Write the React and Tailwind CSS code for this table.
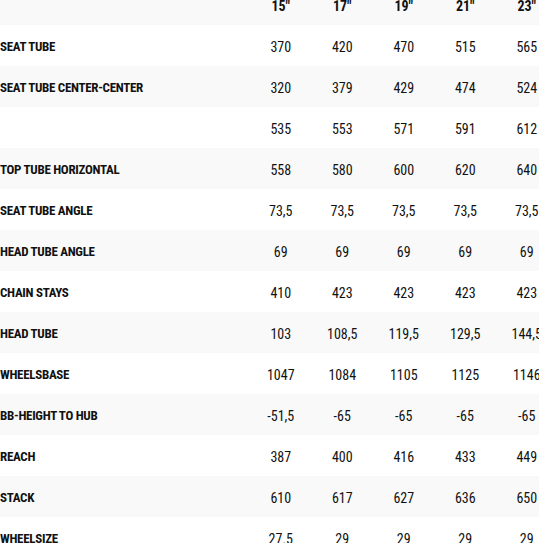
const sizes = ['15"', '17"', '19"', '21"', '23"'];

const rows = [
  ["SEAT TUBE", ["370", "420", "470", "515", "565"]],
  ["SEAT TUBE CENTER-CENTER", ["320", "379", "429", "474", "524"]],
  ["", ["535", "553", "571", "591", "612"]],
  ["TOP TUBE HORIZONTAL", ["558", "580", "600", "620", "640"]],
  ["SEAT TUBE ANGLE", ["73,5", "73,5", "73,5", "73,5", "73,5"]],
  ["HEAD TUBE ANGLE", ["69", "69", "69", "69", "69"]],
  ["CHAIN STAYS", ["410", "423", "423", "423", "423"]],
  ["HEAD TUBE", ["103", "108,5", "119,5", "129,5", "144,5"]],
  ["WHEELSBASE", ["1047", "1084", "1105", "1125", "1146"]],
  ["BB-HEIGHT TO HUB", ["-51,5", "-65", "-65", "-65", "-65"]],
  ["REACH", ["387", "400", "416", "433", "449"]],
  ["STACK", ["610", "617", "627", "636", "650"]],
  ["WHEELSIZE", ["27.5", "29", "29", "29", "29"]],
];

export default function App() {
  return (
    <div className="w-[539px] h-[543px] overflow-hidden bg-white text-[#111] font-['Roboto_Condensed',sans-serif]">
      <div className="-mt-[16px]">
        {/* header: sizes */}
        <div className="grid grid-cols-[250px_repeat(5,61.5px)] h-[41px] pt-[3px] items-center bg-[#f9f9f9]">
          <div />
          {sizes.map((s) => (
            <div key={s} className="text-center text-[14px] font-bold">{s}</div>
          ))}
        </div>
        {rows.map(([label, vals], i) => (
          <div
            key={i}
            className={`grid grid-cols-[250px_repeat(5,61.5px)] h-[41px] pt-[3px] items-center ${i % 2 === 1 ? "bg-[#f9f9f9]" : "bg-white"}`}
          >
            <div className="text-[13px] font-bold tracking-[-0.3px] whitespace-nowrap">{label}</div>
            {vals.map((v, j) => (
              <div key={j} className="text-center text-[14px]">{v}</div>
            ))}
          </div>
        ))}
      </div>
    </div>
  );
}
